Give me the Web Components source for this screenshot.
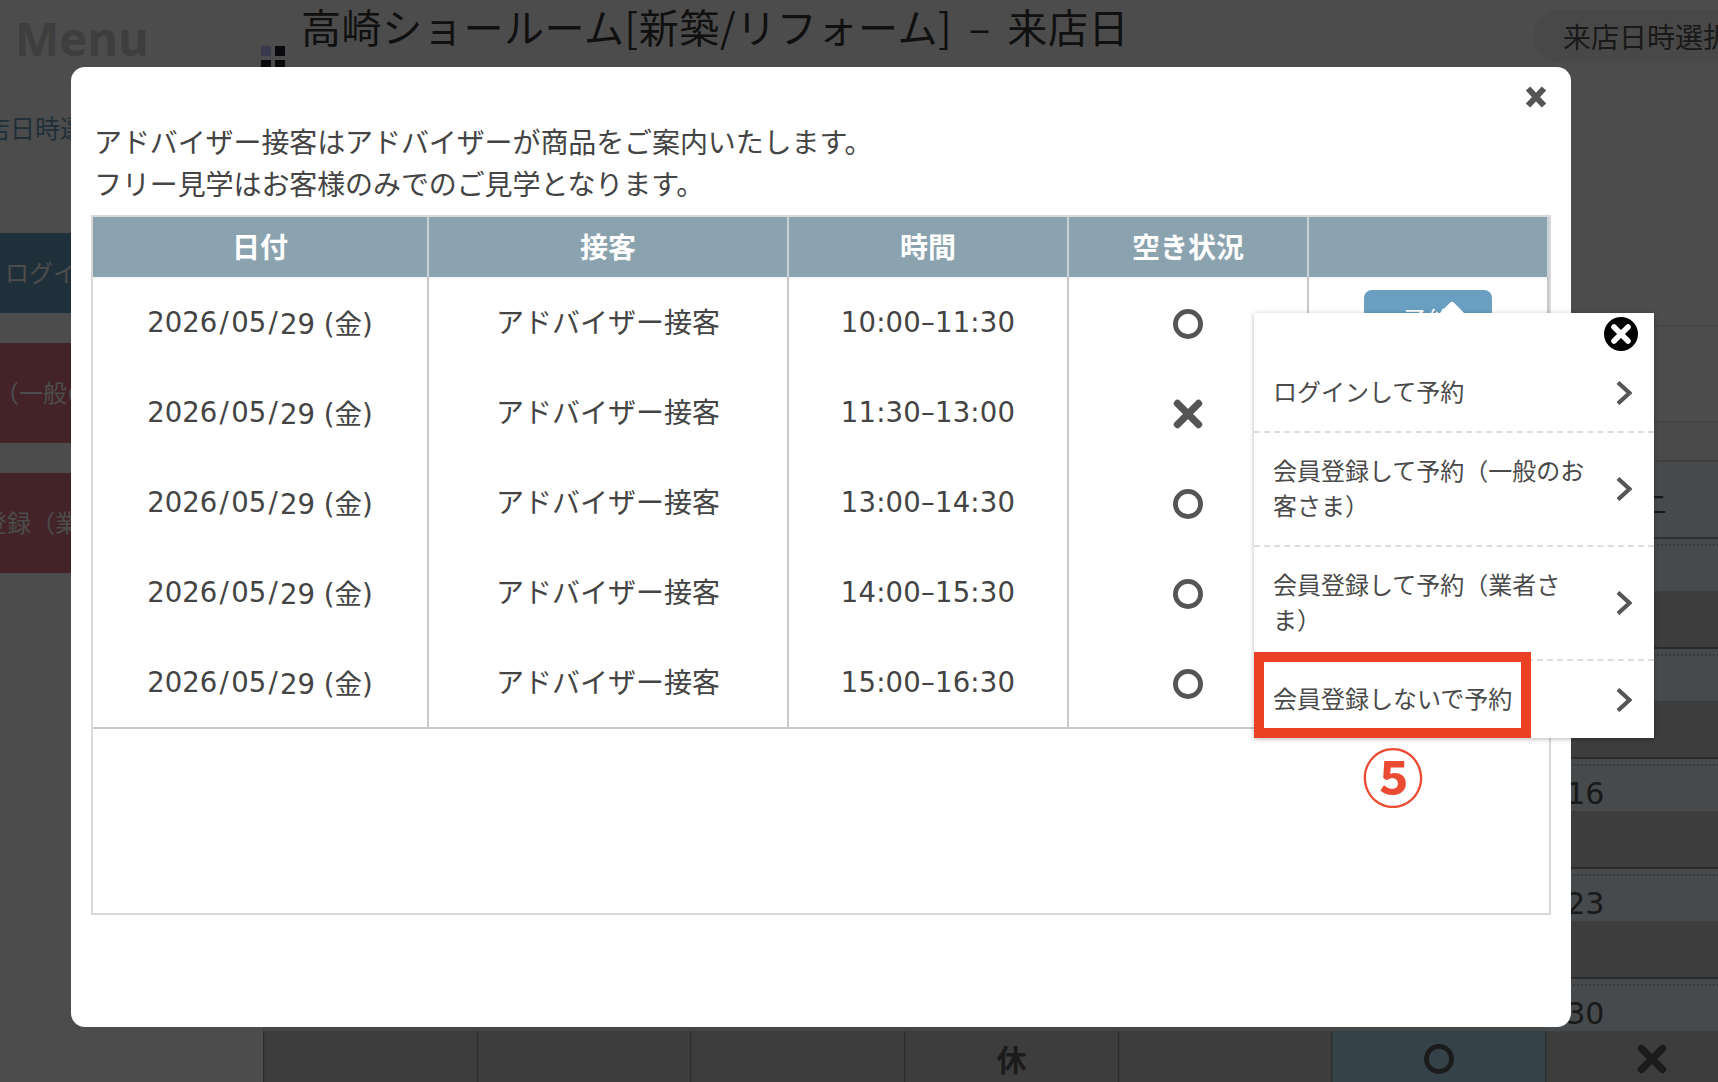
<!DOCTYPE html>
<html lang="ja">
<head>
<meta charset="utf-8">
<title>来店日時選択</title>
<style>
  html, body { margin: 0; padding: 0; }
  body {
    width: 1718px;
    height: 1082px;
    overflow: hidden;
    position: relative;
    background: #fff;
    color: #444;
    font-family: "Noto Sans CJK JP", "Noto Sans", sans-serif;
  }
</style>
</head>
<body>
<app-shell>
  <side-menu slot="side"></side-menu>
  <page-head title-text="高崎ショールーム[新築/リフォーム] – 来店日" pill="来店日時選択"></page-head>
  <month-calendar></month-calendar>
</app-shell>

<modal-dialog>
  <div slot="intro">アドバイザー接客はアドバイザーが商品をご案内いたします。</div>
  <div slot="intro">フリー見学はお客様のみでのご見学となります。</div>
  <slot-table></slot-table>
  <login-popover slot="over">
    <login-item>ログインして予約</login-item>
    <login-item>会員登録して予約（一般のお客さま）</login-item>
    <login-item>会員登録して予約（業者さま）</login-item>
    <login-item last>会員登録しないで予約</login-item>
  </login-popover>
</modal-dialog>

<script>
'use strict';

class MarkIcon extends HTMLElement {
  connectedCallback() {
    const size = this.getAttribute('size') || 30;
    const type = this.getAttribute('type');
    let shape = '<circle cx="15" cy="15" r="12.6" fill="none" stroke="currentColor" stroke-width="4.8"/>';
    if (type === 'x') {
      shape = '<path d="M4.5 4.5 25.5 25.5M25.5 4.5 4.5 25.5" fill="none" stroke="currentColor" stroke-width="7.4" stroke-linecap="round"/>';
    }
    this.attachShadow({mode: 'open'}).innerHTML = `
      <style>:host { display: inline-block; line-height: 0; } svg { display: block; }</style>
      <svg width="${size}" height="${size}" viewBox="0 0 30 30">${shape}</svg>`;
  }
}

class AppShell extends HTMLElement {
  constructor() {
    super();
    this.attachShadow({mode: 'open'}).innerHTML = `
      <style>
        :host { display: flex; width: 1718px; height: 1082px; overflow: hidden; background: #fff; }
        .main { width: 1457px; flex: none; overflow: hidden; }
      </style>
      <slot name="side"></slot>
      <div class="main"><slot></slot></div>`;
  }
}

class SideMenu extends HTMLElement {
  constructor() {
    super();
    this.attachShadow({mode: 'open'}).innerHTML = `
      <style>
        :host { display: block; flex: none; width: 261px; font-size: 24px; }
        .menu { font: 700 47px/48px "Noto Sans", sans-serif; color: #cfcfcf; padding: 14px 0 0 15px; }
        .col { width: 290px; margin-left: -90px; }
        .when { color: #6ba0c1; line-height: 36px; margin-top: 47px; padding-right: 40px; text-align: center; font-size: 25px; }
        .btn { display: flex; box-sizing: border-box; align-items: center; justify-content: center; color: #fff; white-space: nowrap; padding-bottom: 4px; }
        .login { background: #6ba0c1; height: 80px; margin-top: 88px; padding-right: 4px; }
        .red { background: #df7585; height: 100px; margin-top: 30px; }
      </style>
      <div class="menu">Menu</div>
      <div class="col">
        <div class="when">来店日時選択</div>
        <div class="btn login">ログイン</div>
        <div class="btn red">会員登録（一般のお客さま）</div>
        <div class="btn red">会員登録（業者さま）</div>
      </div>`;
  }
}

class PageHead extends HTMLElement {
  connectedCallback() {
    this.attachShadow({mode: 'open'}).innerHTML = `
      <style>
        :host { display: flex; height: 325px; align-items: flex-start; }
        .logo { flex: none; width: 24px; margin-top: 46px; margin-right: 16px; display: grid; grid-template-columns: 10px 10px; gap: 4px; }
        .logo i { height: 10px; background: #22222f; }
        .logo i:first-child { background: #c4c4ff; }
        h1 { flex: 0 0 1232px; margin: 0; font-size: 40px; line-height: 52px; font-weight: 400; color: #383838; letter-spacing: .6px; word-spacing: 7px; white-space: nowrap; }
        .pill { flex: none; margin-top: 10px; width: 320px; height: 53px; border-radius: 27px; background: #f0f0f0; color: #555; font-size: 28px; line-height: 53px; padding-left: 30px; }
      </style>
      <div class="logo"><i></i><i></i><i></i><i></i></div>
      <h1>${this.getAttribute('title-text')}</h1>
      <div class="pill">${this.getAttribute('pill')}</div>`;
  }
}

class MonthCalendar extends HTMLElement {
  constructor() {
    super();
    // only the Saturday column and the last week can be seen behind the dialog
    const saturdays = ['', '', '16', '23', '30'];
    let weeks = '';
    saturdays.forEach((day, i) => {
      let dates = '';
      let marks = '';
      for (let c = 0; c < 7; c++) {
        dates += `<div class="date ${c === 6 ? 'sat' : ''}"><span>${c === 6 ? day : ''}</span></div>`;
      }
      for (let c = 0; c < 7; c++) {
        let mark = '';
        if (i === 4 && c === 3) mark = '<b>休</b>';
        if (i === 4 && c === 5) mark = '<mark-icon type="o"></mark-icon>';
        if (i === 4 && c === 6) mark = '<mark-icon type="x"></mark-icon>';
        marks += `<div class="state ${i === 4 && c === 5 ? 'on' : ''}">${mark}</div>`;
      }
      weeks += dates + marks;
    });
    this.attachShadow({mode: 'open'}).innerHTML = `
      <style>
        :host { display: block; }
        .r1 { height: 96px; box-sizing: border-box; border-top: 2px solid #e6e6e6; }
        .r2 { height: 41px; box-sizing: border-box; border-top: 2px solid #e6e6e6; background: #f8f8f8; }
        .grid { display: grid; grid-template-columns: repeat(7, 213.7px); margin-left: 2px; border-top: 2px solid #d6d6d6; margin-top: -2px; }
        .head { height: 75px; border-bottom: 2px solid #a0a0a0; }
        .head.sat { background: #e9f7ff; font-size: 29px; color: #555; line-height: 75px; text-align: center; }
        .date { height: 52px; box-sizing: border-box; padding-top: 5px; background: #eaeaea; }
        .date.sat { background: #e9f7ff; }
        .date span { display: block; height: 45px; box-sizing: border-box; border-top: 2px dotted #bbb; padding: 6px 0 0 21px;
          font: 30px/44px "DejaVu Sans", sans-serif; color: #555; }
        .state { height: 58px; box-sizing: border-box; background: #cbcbcb; border-left: 1px solid #999; border-bottom: 2px solid #8c8c8c;
          box-shadow: inset 1px 0 0 #bcbcbc; display: flex; align-items: center; justify-content: center; color: #5c5c5c; font-size: 30px; }
        .state b { font-weight: 700; padding-bottom: 3px; }
        .state.on { background: #b4dcf7; }
      </style>
      <div class="r1"></div>
      <div class="r2"></div>
      <div class="grid">
        <div class="head"></div><div class="head"></div><div class="head"></div><div class="head"></div>
        <div class="head"></div><div class="head"></div><div class="head sat">土</div>
        ${weeks}
      </div>`;
  }
}

class ModalDialog extends HTMLElement {
  constructor() {
    super();
    this.attachShadow({mode: 'open'}).innerHTML = `
      <style>
        :host { display: block; position: absolute; inset: 0; background: rgba(0, 0, 0, .7); }
        .box { position: absolute; left: 71px; top: 67px; width: 1500px; height: 960px; box-sizing: border-box;
          background: #fff; border-radius: 14px; padding: 53px 20px 0; }
        .close { position: absolute; left: 1454px; top: 19px; color: #555; }
        .intro { font-size: 28px; letter-spacing: -.1px; line-height: 42px; color: #444; padding: 0 3px 11px; white-space: nowrap; }
      </style>
      <div class="box">
        <div class="close"><svg width="22" height="22" viewBox="0 0 22 22" style="display:block"><path d="M3 2.5 19 19.5M19 2.5 3 19.5" fill="none" stroke="currentColor" stroke-width="6"/></svg></div>
        <div class="intro"><slot name="intro"></slot></div>
        <slot></slot>
        <slot name="over"></slot>
      </div>`;
  }
}

const SLOT_ROWS = [
  ['10:00–11:30', 'o'],
  ['11:30–13:00', 'x'],
  ['13:00–14:30', 'o'],
  ['14:00–15:30', 'o'],
  ['15:00–16:30', 'o'],
];

class SlotTable extends HTMLElement {
  constructor() {
    super();
    let rows = '';
    SLOT_ROWS.forEach((row, i) => {
      rows += `
        <div class="row">
          <div class="cell num">2026<i>/</i>05<i>/</i>29 (金)</div>
          <div class="cell"><span class="up">アドバイザー接客</span></div>
          <div class="cell num time">${row[0]}</div>
          <div class="cell mark"><mark-icon type="${row[1]}"></mark-icon></div>
          <div class="cell">${i === 0 ? '<span class="go">予約</span>' : ''}</div>
        </div>`;
    });
    this.attachShadow({mode: 'open'}).innerHTML = `
      <style>
        :host { display: block; width: 1460px; height: 700px; box-sizing: border-box; border: 2px solid #d9d9d9; }
        .row { display: grid; grid-template-columns: 336px 360px 280px 240px 240px; height: 90px; }
        .head { height: 60px; background: #8aa3af; color: #fff; font-weight: 700; box-shadow: 0 2px 3px rgba(0, 0, 0, .05); position: relative; }
        .cell { display: flex; align-items: center; justify-content: center; box-sizing: border-box; border-right: 2px solid #c9c9c9; font-size: 28px; color: #444; }
        .head .cell { border-right-color: #c6d2d8; color: #fff; padding-bottom: 3px; }
        .up { padding-bottom: 2px; }
        .num { font-family: "DejaVu Sans", "Noto Sans CJK JP", sans-serif; font-size: 27.5px; white-space: pre; }
        .time { letter-spacing: .2px; }
        .num i { font-style: normal; margin: 0 2.3px; }
        .mark { color: #555; padding-top: 3px; }
        .go { display: block; width: 128px; height: 66px; margin-top: 2px; border-radius: 8px; background: #6a9fc1; color: #fff; font-size: 26px; line-height: 60px; text-align: center; }
        .body { border-bottom: 2px solid #c9c9c9; }
      </style>
      <div class="row head">
        <div class="cell">日付</div><div class="cell">接客</div><div class="cell">時間</div><div class="cell">空き状況</div><div class="cell"></div>
      </div>
      <div class="body">${rows}</div>`;
  }
}

class LoginPopover extends HTMLElement {
  constructor() {
    super();
    this.attachShadow({mode: 'open'}).innerHTML = `
      <style>
        :host { display: block; position: absolute; left: 1183px; top: 246px; width: 400px; background: #fff; padding-top: 41px;
          box-shadow: 0 1px 5px rgba(0, 0, 0, .28); font-size: 24px; color: #4a4a4a; }
        .tip { position: absolute; left: 187px; top: -10px; width: 22px; height: 22px; background: #fff; transform: rotate(45deg) scale(.85); border-radius: 3px; }
        .x { position: absolute; right: 16px; top: 4px; width: 34px; height: 34px; }
        .mark { position: absolute; left: 0; top: 339px; width: 257px; height: 66px; border: 10px solid #ec4024; }
        .five { position: absolute; left: 100px; top: 424px; width: 78px; text-align: center; font-size: 62px; line-height: 76px; font-weight: 700; color: #ec4b33; }
      </style>
      <div class="tip"></div>
      <svg class="x" viewBox="0 0 34 34"><circle cx="17" cy="17" r="17" fill="#000"/><path d="M10 10 24 24M24 10 10 24" fill="none" stroke="#fff" stroke-width="5.5" stroke-linecap="round"/></svg>
      <slot></slot>
      <div class="mark"></div>
      <div class="five">⑤</div>`;
  }
}

class LoginItem extends HTMLElement {
  constructor() {
    super();
    this.attachShadow({mode: 'open'}).innerHTML = `
      <style>
        :host { display: flex; align-items: center; justify-content: space-between; padding: 19px 22px 19px 19px;
          line-height: 35px; border-bottom: 2px dashed #ddd; }
        :host([last]) { border-bottom: 0; }
        .txt { width: 322px; padding-bottom: 4px; }
        svg { flex: none; display: block; }
      </style>
      <div class="txt"><slot></slot></div>
      <svg width="16" height="24" viewBox="0 0 16 24"><path d="M2 1.5 13.5 12 2 22.5" fill="none" stroke="#555" stroke-width="4.2"/></svg>`;
  }
}

customElements.define('mark-icon', MarkIcon);
customElements.define('app-shell', AppShell);
customElements.define('side-menu', SideMenu);
customElements.define('page-head', PageHead);
customElements.define('month-calendar', MonthCalendar);
customElements.define('modal-dialog', ModalDialog);
customElements.define('slot-table', SlotTable);
customElements.define('login-popover', LoginPopover);
customElements.define('login-item', LoginItem);
</script>
</body>
</html>
